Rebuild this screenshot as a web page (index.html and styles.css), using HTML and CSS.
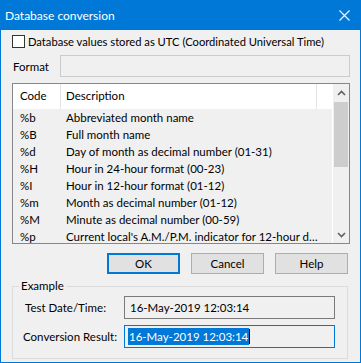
FILE: index.html
```html
<!DOCTYPE html>
<html>
<head>
<meta charset="utf-8">
<link rel="stylesheet" href="styles.css">
</head>
<body>
<div class="win">
  <div class="titlebar">
    <span class="title">Database conversion</span>
    <svg class="close" width="11" height="11" viewBox="0 0 11 11"><path d="M0.5 0.5 L10.5 10.5 M10.5 0.5 L0.5 10.5" stroke="#fff" stroke-width="1.1" fill="none"/></svg>
  </div>
  <div class="content">
    <div class="chk"><span class="box"></span><span>Database values stored as UTC (Coordinated Universal Time)</span></div>
    <div class="fmt"><span class="fmt-label">Format</span><div class="fmt-input"></div></div>
    <div class="list">
      <div class="list-main">
        <div class="hdr">
          <div class="h1">Code</div>
          <div class="h2">Description</div>
          <div class="h3"></div>
        </div>
        <div class="rows">
          <div class="row"><span class="c1">%b</span><span class="c2">Abbreviated month name</span></div>
          <div class="row"><span class="c1">%B</span><span class="c2">Full month name</span></div>
          <div class="row"><span class="c1">%d</span><span class="c2">Day of month as decimal number (01-31)</span></div>
          <div class="row"><span class="c1">%H</span><span class="c2">Hour in 24-hour format (00-23)</span></div>
          <div class="row"><span class="c1">%I</span><span class="c2">Hour in 12-hour format (01-12)</span></div>
          <div class="row"><span class="c1">%m</span><span class="c2">Month as decimal number (01-12)</span></div>
          <div class="row"><span class="c1">%M</span><span class="c2">Minute as decimal number (00-59)</span></div>
          <div class="row"><span class="c1">%p</span><span class="c2">Current local's A.M./P.M. indicator for 12-hour d…</span></div>
        </div>
      </div>
      <div class="sb">
        <div class="sb-btn"><svg width="9" height="6" viewBox="0 0 9 6"><path d="M1 5 L4.5 1.5 L8 5" stroke="#606060" stroke-width="1.6" fill="none"/></svg></div>
        <div class="sb-track"><div class="sb-thumb"></div></div>
        <div class="sb-btn"><svg width="9" height="6" viewBox="0 0 9 6"><path d="M1 1 L4.5 4.5 L8 1" stroke="#606060" stroke-width="1.6" fill="none"/></svg></div>
      </div>
    </div>
    <div class="btns">
      <div class="btn btn-default">OK</div>
      <div class="btn">Cancel</div>
      <div class="btn">Help</div>
    </div>
    <div class="grp">
      <span class="legend">Example</span>
      <div class="grp-row"><span class="lbl lbl-a">Test Date/Time:</span><div class="field">16-May-2019 12:03:14</div></div>
      <div class="grp-row"><span class="lbl lbl-b">Conversion Result:</span><div class="field field-focus"><span class="sel">16-May-2019 12:03:14</span><span class="caret"></span></div></div>
    </div>
  </div>
</div>
</body>
</html>
```

FILE: styles.css
```css
* { box-sizing: border-box; }
html, body { margin: 0; padding: 0; background: #f0f0f0; }
body { font-family: Lato, "Liberation Sans", sans-serif; font-size: 11.5px; color: #000; }

.win {
  width: 361px;
  height: 363px;
  border: 1px solid #0078d7;
  background: #f0f0f0;
  display: flex;
  flex-direction: column;
}

.titlebar {
  height: 29px;
  background: #0078d7;
  color: #fff;
  display: flex;
  align-items: center;
  justify-content: space-between;
  padding: 0 10px 1px 4px;
  flex-shrink: 0;
}
.title { font-size: 12px; white-space: nowrap; }
.close { display: block; }

.content {
  padding: 5px 10px 0 11px;
  display: flex;
  flex-direction: column;
}

.chk { display: flex; align-items: center; height: 13px; line-height: 13px; white-space: nowrap; font-size: 11.2px; }
.box {
  width: 13px; height: 13px;
  border: 1px solid #333;
  background: #fff;
  margin-right: 3px;
  flex-shrink: 0;
}

.fmt { display: flex; align-items: center; margin-top: 7px; height: 22px; }
.fmt-label { width: 48px; padding-left: 1px; }
.fmt-input {
  flex: 1;
  height: 22px;
  border: 1px solid #cccccc;
  background: #f0f0f0;
}

.list {
  margin-top: 6px;
  height: 161px;
  border: 1px solid #828790;
  display: flex;
  overflow: hidden;
}
.list-main { flex: 1; display: flex; flex-direction: column; overflow: hidden; background: #f0f0f0; }
.hdr { height: 25px; background: #fff; display: flex; flex-shrink: 0; line-height: 24px; }
.h1 { width: 48px; padding-left: 7px; border-right: 1px solid #e5e5e5; }
.h2 { width: 256px; padding-left: 5px; border-right: 1px solid #e5e5e5; }
.h3 { flex: 1; }
.rows { display: flex; flex-direction: column; }
.row { height: 17px; line-height: 17px; display: flex; white-space: nowrap; flex-shrink: 0; }
.c1 { width: 53px; padding-left: 7px; flex-shrink: 0; }
.c2 { flex-shrink: 0; }

.sb {
  width: 17px;
  display: flex;
  flex-direction: column;
  background: #f0f0f0;
  border-left: 1px solid #fff;
}
.sb-btn { height: 17px; display: flex; align-items: center; justify-content: center; flex-shrink: 0; }
.sb-btn svg { display: block; }
.sb-track { flex: 1; padding: 1px 1px 0 1px; }
.sb-thumb { height: 65px; background: #cdcdcd; }

.btns { display: flex; justify-content: flex-end; gap: 11px; margin-top: 9px; margin-right: 2px; }
.btn {
  width: 73px; height: 21px;
  border: 1px solid #adadad;
  background: #e1e1e1;
  display: flex; align-items: center; justify-content: center;
}
.btn-default { border: 2px solid #0078d7; }

.grp {
  position: relative;
  margin-top: 12px;
  margin-right: 2px;
  border: 1px solid #dcdcdc;
  padding: 9px 12px 10px 0;
  display: flex;
  flex-direction: column;
  gap: 6px;
}
.legend {
  position: absolute;
  left: 6px;
  top: -9px;
  padding: 0 2px;
  background: #f0f0f0;
  line-height: 16px;
}
.grp-row { display: flex; align-items: center; }
.lbl { width: 111px; white-space: nowrap; flex-shrink: 0; }
.lbl-a { padding-left: 12px; }
.lbl-b { padding-left: 10px; }
.field {
  flex: 1;
  height: 23px;
  border: 1px solid #7a7a7a;
  display: flex; align-items: center;
  padding-left: 5px;
  white-space: nowrap;
}
.field-focus { border-color: #0078d7; padding-left: 3px; }
.sel { background: #0078d7; color: #fff; padding: 1px 1px; line-height: 15px; }
.caret { width: 1px; height: 15px; background: #000; }
```
